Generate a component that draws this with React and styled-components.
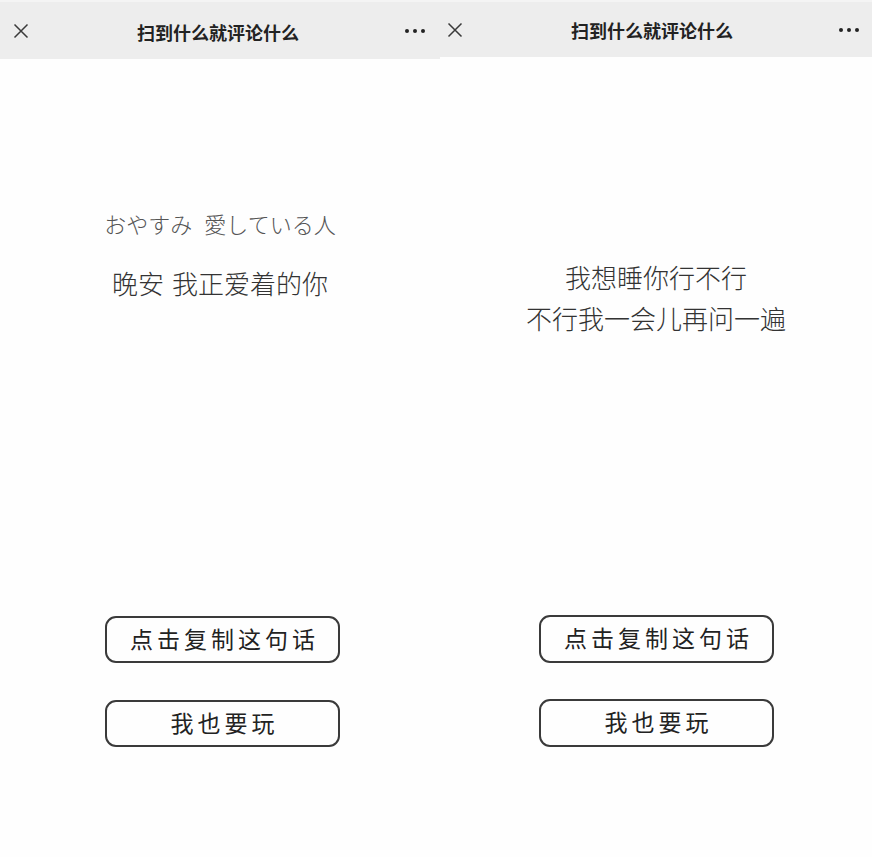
import React from "react";
import styled, { createGlobalStyle } from "styled-components";

const Global = createGlobalStyle`
  html, body { margin: 0; padding: 0; background: #fefefe; }
  body { font-family: "Noto Sans CJK SC", "Noto Sans", sans-serif; }
`;

const Page = styled.div`
  display: flex;
  width: 872px;
  height: 857px;
  overflow: hidden;
  background: #fefefe;
`;

const Panel = styled.div`
  width: ${(p) => p.$w}px;
  display: flex;
  flex-direction: column;
  align-items: center;
`;

const Header = styled.div`
  align-self: stretch;
  height: ${(p) => p.$h}px;
  background: #ededed;
  border-top: 2px solid #f4f4f4;
  box-sizing: border-box;
  display: flex;
  align-items: center;
  justify-content: space-between;
  padding: 0 ${(p) => p.$pr}px 0 ${(p) => p.$pl}px;
`;

const Title = styled.div`
  font-family: "Noto Sans CJK SC", sans-serif;
  font-weight: 700;
  font-size: 18px;
  color: #222;
  padding-top: ${(p) => p.$pt || 0}px;
`;

const IconBox = styled.div`
  width: 22px;
  height: 20px;
  display: flex;
  align-items: center;
  justify-content: center;
`;

const Lyrics = styled.div`
  margin-top: ${(p) => p.$mt}px;
  display: flex;
  flex-direction: column;
  align-items: center;
  gap: ${(p) => p.$gap}px;
`;

const Line = styled.div`
  font-family: ${(p) => (p.$jp ? '"Noto Sans CJK JP"' : '"Noto Sans CJK SC"')}, sans-serif;
  font-weight: 300;
  font-size: ${(p) => p.$size}px;
  line-height: ${(p) => p.$lh}px;
  color: ${(p) => p.$color};
  white-space: pre;
`;

const Gap = styled.span`
  display: inline-block;
  width: ${(p) => p.$w}px;
`;

const Buttons = styled.div`
  margin-top: ${(p) => p.$mt}px;
  display: flex;
  flex-direction: column;
  gap: ${(p) => p.$gap}px;
  margin-left: ${(p) => p.$ml}px;
`;

const Button = styled.div`
  width: 235px;
  height: ${(p) => p.$h}px;
  box-sizing: border-box;
  border: 2px solid #3a3a3a;
  border-radius: 11px;
  display: flex;
  align-items: center;
  justify-content: center;
  font-family: "Noto Sans CJK SC", serif;
  font-weight: 400;
  font-size: 23px;
  letter-spacing: 4px;
  padding: 0 0 4px 4px;
  color: #222;
`;

const CloseIcon = () => (
  <svg width="16" height="16" viewBox="0 0 16 16">
    <path d="M1.5 1.5 L14.5 14.5 M14.5 1.5 L1.5 14.5" stroke="#3a3a3a" strokeWidth="1.5" fill="none" />
  </svg>
);

const MoreIcon = () => (
  <svg width="22" height="6" viewBox="0 0 22 6">
    <circle cx="3" cy="3" r="2" fill="#222" />
    <circle cx="11" cy="3" r="2" fill="#222" />
    <circle cx="19" cy="3" r="2" fill="#222" />
  </svg>
);

const NavBar = ({ h, pl, pr, pt }) => (
  <Header $h={h} $pl={pl} $pr={pr}>
    <IconBox><CloseIcon /></IconBox>
    <Title $pt={pt}>扫到什么就评论什么</Title>
    <IconBox><MoreIcon /></IconBox>
  </Header>
);

export default function App() {
  return (
    <Page>
      <Global />
      <Panel $w={440}>
        <NavBar h={59} pl={10} pr={14} pt={2} />
        <Lyrics $mt={148} $gap={26}>
          <Line $jp $size={22} $lh={32} $color="#555">おやすみ<Gap $w={12} />愛している人</Line>
          <Line $size={26} $lh={36} $color="#333">晚安<Gap $w={8} />我正爱着的你</Line>
        </Lyrics>
        <Buttons $mt={315} $gap={37} $ml={5}>
          <Button $h={47}>点击复制这句话</Button>
          <Button $h={47}>我也要玩</Button>
        </Buttons>
      </Panel>
      <Panel $w={432}>
        <NavBar h={57} pl={4} pr={12} pt={1} />
        <Lyrics $mt={202} $gap={5}>
          <Line $size={26} $lh={36} $color="#333">我想睡你行不行</Line>
          <Line $size={26} $lh={36} $color="#333">不行我一会儿再问一遍</Line>
        </Lyrics>
        <Buttons $mt={279} $gap={36} $ml={1}>
          <Button $h={48}>点击复制这句话</Button>
          <Button $h={48}>我也要玩</Button>
        </Buttons>
      </Panel>
    </Page>
  );
}
